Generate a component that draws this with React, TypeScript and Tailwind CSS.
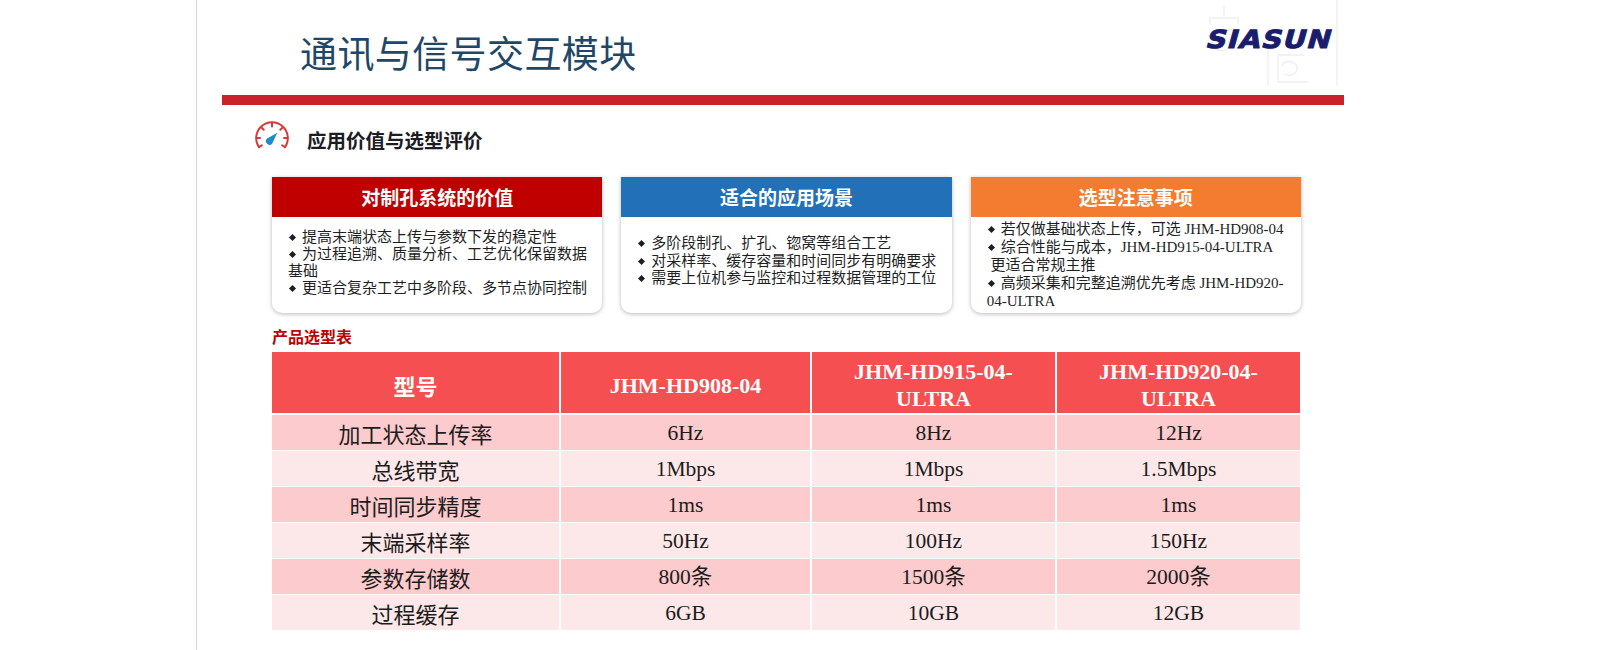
import React from 'react';

type Card = {
  title: string;
  color: string;
  pad: string;
  leading: string;
  lines: { text: string; bullet: boolean }[];
};

const cards: Card[] = [
  {
    title: '对制孔系统的价值',
    color: 'bg-[#c00000]',
    pad: 'pt-[12px]',
    leading: 'leading-[17px]',
    lines: [
      { text: '提高末端状态上传与参数下发的稳定性', bullet: true },
      { text: '为过程追溯、质量分析、工艺优化保留数据', bullet: true },
      { text: '基础', bullet: false },
      { text: '更适合复杂工艺中多阶段、多节点协同控制', bullet: true },
    ],
  },
  {
    title: '适合的应用场景',
    color: 'bg-[#2271b8]',
    pad: 'pt-[18px]',
    leading: 'leading-[17.5px]',
    lines: [
      { text: '多阶段制孔、扩孔、锪窝等组合工艺', bullet: true },
      { text: '对采样率、缓存容量和时间同步有明确要求', bullet: true },
      { text: '需要上位机参与监控和过程数据管理的工位', bullet: true },
    ],
  },
  {
    title: '选型注意事项',
    color: 'bg-[#f47c30]',
    pad: 'pt-[3px]',
    leading: 'leading-[18px]',
    lines: [
      { text: '若仅做基础状态上传，可选 JHM-HD908-04', bullet: true },
      { text: '综合性能与成本，JHM-HD915-04-ULTRA', bullet: true },
      { text: ' 更适合常规主推', bullet: false },
      { text: '高频采集和完整追溯优先考虑 JHM-HD920-', bullet: true },
      { text: '04-ULTRA', bullet: false },
    ],
  },
];

const headers: string[][] = [['型号'], ['JHM-HD908-04'], ['JHM-HD915-04-', 'ULTRA'], ['JHM-HD920-04-', 'ULTRA']];

const rows = [
  ['加工状态上传率', '6Hz', '8Hz', '12Hz'],
  ['总线带宽', '1Mbps', '1Mbps', '1.5Mbps'],
  ['时间同步精度', '1ms', '1ms', '1ms'],
  ['末端采样率', '50Hz', '100Hz', '150Hz'],
  ['参数存储数', '800条', '1500条', '2000条'],
  ['过程缓存', '6GB', '10GB', '12GB'],
];

function Gauge() {
  return (
    <svg width="40" height="35" viewBox="0 0 38 33" fill="none">
      <g stroke="#d8393b" strokeWidth="1.9" strokeLinecap="round">
        <path d="M6.7 26.6 A15 15 0 1 1 31.3 26.6" />
        <path d="M19 3.5 V7" />
        <path d="M8.6 7.6 L11.1 10.1" />
        <path d="M29.4 7.6 L26.9 10.1" />
        <path d="M4.2 18 H7.6" />
        <path d="M33.8 18 H30.4" />
        <path d="M6.7 26.6 L9.4 24.8" />
        <path d="M31.3 26.6 L28.6 24.8" />
      </g>
      <path d="M24 13 L19.3 23.1 A3.4 3.4 0 1 1 14.3 18.5 Z" fill="#1e8bcd" />
    </svg>
  );
}

function Watermark() {
  return (
    <svg width="140" height="90" viewBox="0 0 140 90" fill="none" className="absolute left-[1003px] top-0">
      <g stroke="#eeeeee" strokeWidth="1.3" strokeLinecap="round">
        <path d="M137 0 V85" />
        <path d="M68 50 V85" />
        <path d="M24 6 V16 M10 18 H38 M10 18 V24 M38 18 V24" />
        <path d="M16 30 H34 Q40 30 36 38 L30 46 Q26 52 18 50 Q10 48 12 40 Z" />
        <path d="M78 55 H104 M78 55 V82 H108 M82 66 Q84 60 92 62 Q100 66 96 72 Q90 78 84 74" />
      </g>
    </svg>
  );
}

function Bullet() {
  return <span className="inline-block w-[5px] h-[5px] bg-[#1f1f1f] rotate-45 ml-[2px] mr-[7px] relative -top-[2px]" />;
}

function InfoCard({ card }: { card: Card }) {
  return (
    <div className="rounded-b-[10px] bg-white shadow-[0_1px_4px_rgba(0,0,0,0.28)] overflow-hidden">
      <div className={`${card.color} h-[40px] flex items-center justify-center text-white text-[19px] font-bold`}>
        {card.title}
      </div>
      <div className={`h-[96px] px-[16px] ${card.pad} ${card.leading} text-[15px] text-[#1f1f1f] font-['Liberation_Serif','Noto_Sans_CJK_SC',serif]`}>
        {card.lines.map((l, i) => (
          <div key={i} className="whitespace-pre">
            {l.bullet && <Bullet />}
            {l.text}
          </div>
        ))}
      </div>
    </div>
  );
}

export default function App() {
  return (
    <div className="w-[1600px] h-[650px] bg-white flex overflow-hidden font-['Noto_Sans_CJK_SC',sans-serif]">
      <div className="w-[196px] shrink-0" />
      <div className="flex-1 h-full border-l border-[#d6d6d6]">
        <header className="relative h-[95px] flex">
          <Watermark />
          <div className="w-[1010px] pl-[103px] pt-[34px]">
            <h1 className="text-[37px] leading-[37px] font-normal text-[#1f4868] tracking-[0.4px]">通讯与信号交互模块</h1>
          </div>
          <div className="relative pt-[27px]">
            <div className="w-[126px] text-[25px] leading-[25px] font-bold text-[#1a1d6e] tracking-[1px] scale-x-[1.12] -skew-x-[14deg] origin-left [-webkit-text-stroke:1px_#1a1d6e] font-['DejaVu_Sans','Liberation_Sans',sans-serif]">
              SIASUN
            </div>
          </div>
        </header>

        <div className="ml-[25px] w-[1122px] h-[10px] bg-[#c9222a]" />

        <div className="ml-[55px] mt-[14px] flex items-start h-[34px]">
          <Gauge />
          <h2 className="ml-[15px] mt-[11px] text-[19.5px] leading-[20px] font-bold text-[#1c1c24]">应用价值与选型评价</h2>
        </div>

        <div className="ml-[75px] w-[1029px]">
          <section className="mt-[24px] grid grid-cols-3 gap-[19px]">
            {cards.map((c) => (
              <InfoCard key={c.title} card={c} />
            ))}
          </section>

          <p className="mt-[15px] text-[16px] leading-[16px] font-bold text-[#c00000]">产品选型表</p>

          <div className="mt-[8px]">
            <div className="grid grid-cols-[287px_249px_243px_243px] gap-x-[2px] mb-[2px]">
              {headers.map((h, i) => (
                <div
                  key={i}
                  className={`h-[61px] bg-[#f64f51] text-white font-bold flex flex-col items-center justify-center pt-[5px] text-[22px] ${
                    i === 0 ? 'leading-[24px]' : "leading-[27px] font-['Liberation_Serif','Noto_Sans_CJK_SC',serif]"
                  }`}
                >
                  {h.map((t) => (
                    <span key={t}>{t}</span>
                  ))}
                </div>
              ))}
            </div>
            <div className="grid grid-cols-[287px_249px_243px_243px] gap-x-[2px] gap-y-[1px]">
              {rows.map((r, ri) =>
                r.map((cell, ci) => (
                  <div
                    key={`${ri}-${ci}`}
                    className={`h-[35px] flex items-center justify-center text-[#1c1c1c] ${
                      ri % 2 === 0 ? 'bg-[#fccbcd]' : 'bg-[#fde8e9]'
                    } ${
                      ci === 0
                        ? 'text-[22px] leading-[24px]'
                        : "text-[21.5px] leading-[24px] font-['Liberation_Serif','Noto_Sans_CJK_SC',serif]"
                    }`}
                  >
                    {cell}
                  </div>
                ))
              )}
            </div>
          </div>
        </div>
      </div>
    </div>
  );
}
